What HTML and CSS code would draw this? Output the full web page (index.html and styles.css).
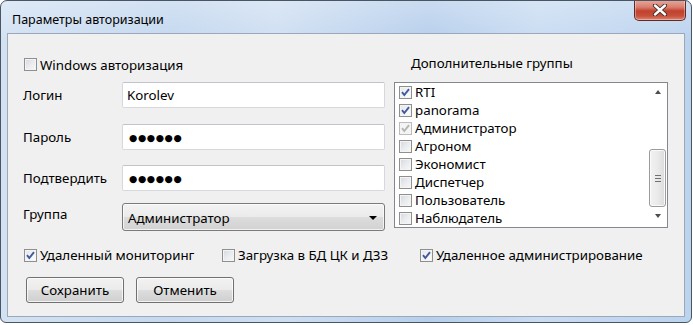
FILE: index.html
```html
<!DOCTYPE html>
<html lang="ru">
<head>
<meta charset="utf-8">
<title>Параметры авторизации</title>
<link rel="stylesheet" href="styles.css">
</head>
<body>
<div class="window">
  <div class="titlebar">
    <span class="title">Параметры авторизации</span>
    <div class="close">
      <svg width="18" height="12" viewBox="0 0 18 12"><path d="M4 1.5 L14 10.5 M14 1.5 L4 10.5" stroke="#3b2a2a" stroke-width="4.2" stroke-linecap="round"/><path d="M4 1.5 L14 10.5 M14 1.5 L4 10.5" stroke="#ffffff" stroke-width="2.4" stroke-linecap="round"/></svg>
    </div>
  </div>
  <div class="client">
    <div class="main">
      <div class="left">
        <div class="check head-check"><span class="box"></span><span>Windows авторизация</span></div>
        <div class="form">
          <div class="row r1"><span class="lbl">Логин</span><div class="field">Korolev</div></div>
          <div class="row r2"><span class="lbl">Пароль</span><div class="field dots">●●●●●●</div></div>
          <div class="row r3"><span class="lbl">Подтвердить</span><div class="field dots">●●●●●●</div></div>
          <div class="row r4"><span class="lbl lbl-up">Группа</span><div class="combo"><span>Администратор</span><span class="tri-down dark"></span></div></div>
        </div>
      </div>
      <div class="right">
        <div class="groups-title">Дополнительные группы</div>
        <div class="listbox">
          <div class="items">
            <div class="check item"><span class="box checked"><svg viewBox="0 0 13 13"><path d="M3 6.2 L5.3 9 L10 3.2" fill="none" stroke="#3f58a0" stroke-width="1.9"/></svg></span><span>RTI</span></div>
            <div class="check item"><span class="box checked"><svg viewBox="0 0 13 13"><path d="M3 6.2 L5.3 9 L10 3.2" fill="none" stroke="#3f58a0" stroke-width="1.9"/></svg></span><span>panorama</span></div>
            <div class="check item"><span class="box disabled"><svg viewBox="0 0 13 13"><path d="M3 6.2 L5.3 9 L10 3.2" fill="none" stroke="#b4b4b4" stroke-width="1.9"/></svg></span><span>Администратор</span></div>
            <div class="check item"><span class="box"></span><span>Агроном</span></div>
            <div class="check item"><span class="box"></span><span>Экономист</span></div>
            <div class="check item"><span class="box"></span><span>Диспетчер</span></div>
            <div class="check item"><span class="box"></span><span>Пользователь</span></div>
            <div class="check item"><span class="box"></span><span>Наблюдатель</span></div>
          </div>
          <div class="scrollbar">
            <span class="arrow"><span class="tri-up"></span></span>
            <span class="track-top"></span>
            <span class="thumb"><span class="grip"></span><span class="grip"></span><span class="grip"></span></span>
            <span class="arrow"><span class="tri-down"></span></span>
          </div>
        </div>
      </div>
    </div>
    <div class="options">
      <div class="check"><span class="box checked"><svg viewBox="0 0 13 13"><path d="M3 6.2 L5.3 9 L10 3.2" fill="none" stroke="#3f58a0" stroke-width="1.9"/></svg></span><span>Удаленный мониторинг</span></div>
      <div class="check"><span class="box"></span><span>Загрузка в БД ЦК и ДЗЗ</span></div>
      <div class="check"><span class="box checked"><svg viewBox="0 0 13 13"><path d="M3 6.2 L5.3 9 L10 3.2" fill="none" stroke="#3f58a0" stroke-width="1.9"/></svg></span><span>Удаленное администрирование</span></div>
    </div>
    <div class="buttons">
      <div class="btn">Сохранить</div>
      <div class="btn">Отменить</div>
    </div>
  </div>
</div>
</body>
</html>
```

FILE: styles.css
```css
* { box-sizing: border-box; }
html, body { margin: 0; padding: 0; background: #ffffff; }
body {
  width: 693px;
  height: 325px;
  font-family: "Noto Sans", "Open Sans", sans-serif;
  font-size: 13.3px;
  color: #000;
}
.window {
  width: 692px;
  height: 323px;
  border: 1px solid #4a5563;
  border-radius: 7px 7px 6px 6px;
  background:
    linear-gradient(to bottom, rgba(255,255,255,0.25), rgba(255,255,255,0) 40px),
    linear-gradient(to right, #d3e2f3 0%, #c4d8ef 25%, #cfdff2 40%, #b7cfec 62%, #c9dcf2 78%, #bcd3ee 100%);
  display: flex;
  flex-direction: column;
  overflow: hidden;
}
.titlebar {
  height: 32px;
  display: flex;
  justify-content: space-between;
  align-items: flex-start;
  padding-left: 11px;
  padding-right: 5px;
}
.title {
  margin-top: 11px;
  line-height: 16px;
  font-size: 12.5px;
  color: #000;
}
.close {
  margin-top: -1px;
  width: 52px;
  height: 21px;
  border: 1px solid #5d2a24;
  border-top: none;
  border-radius: 0 0 5px 5px;
  background: linear-gradient(to bottom, #e9a99c 0%, #d9806f 35%, #c0412e 55%, #c8503c 80%, #dc8674 100%);
  display: flex;
  align-items: center;
  justify-content: center;
  box-shadow: inset 0 0 0 1px rgba(255,255,255,0.35);
}
.client {
  flex: 1;
  margin: 0 6px 5px 6px;
  border: 1px solid #9aa8ba;
  background: #f0f0f0;
  padding: 22px 0 0 15px;
}
.main {
  display: grid;
  grid-template-columns: 362px 274px;
  column-gap: 9px;
}
.check {
  display: flex;
  align-items: center;
  white-space: nowrap;
}
.box {
  width: 13px;
  height: 13px;
  flex: 0 0 13px;
  border: 1px solid #8e8f8f;
  background: linear-gradient(135deg, #d4d7dc 0%, #e9ebee 50%, #f8f8f8 100%);
  box-shadow: inset 0 0 0 1px #f4f4f4;
  margin-right: 3px;
  position: relative;
}
.box svg { position: absolute; left: -1px; top: -1px; width: 13px; height: 13px; }
.box.checked {
  background: linear-gradient(135deg, #e4e6ea 0%, #f4f5f6 60%, #ffffff 100%);
}
.box.disabled {
  border-color: #bcbcbc;
  background: #f4f4f4;
}
.head-check {
  height: 26px;
  align-items: flex-start;
  padding-top: 0px;
  padding-left: 1px;
}
.head-check .box { margin-top: 2px; }
.form { display: flex; flex-direction: column; }
.row {
  display: flex;
  align-items: center;
}
.r2 { margin-top: 16px; }
.r3 { margin-top: 15px; }
.r4 { margin-top: 12px; }
.lbl {
  width: 99px;
  flex: 0 0 99px;
}
.lbl-up { margin-top: -6px; }
.field {
  width: 263px;
  height: 26px;
  background: #fff;
  border: 1px solid #d5d9de;
  border-top-color: #c0c4ca;
  border-radius: 2px;
  padding: 0 4px;
  display: flex;
  align-items: center;
}
.dots {
  font-family: "DejaVu Sans", sans-serif;
  font-size: 9.5px;
  letter-spacing: 0.6px;
  padding-left: 6px;
}
.combo {
  width: 263px;
  height: 28px;
  border: 1px solid #7a7a7a;
  border-radius: 3px;
  background: linear-gradient(to bottom, #f3f3f3 0%, #ebebeb 48%, #dcdcdc 52%, #d2d2d2 100%);
  box-shadow: inset 0 0 0 1px rgba(255,255,255,0.7);
  display: flex;
  align-items: center;
  justify-content: space-between;
  padding: 2px 7px 0 5px;
}
.tri-down {
  width: 0; height: 0;
  border-left: 3.5px solid transparent;
  border-right: 3.5px solid transparent;
  border-top: 4px solid #4d4d4d;
}
.tri-down.dark { border-top-color: #000; border-left-width: 4px; border-right-width: 4px; }
.tri-up {
  width: 0; height: 0;
  border-left: 3.5px solid transparent;
  border-right: 3.5px solid transparent;
  border-bottom: 4px solid #4d4d4d;
}
.groups-title {
  height: 26px;
  padding-left: 17px;
  margin-top: -2px;
}
.listbox {
  height: 146px;
  border: 1px solid #828790;
  background: #fff;
  display: flex;
  justify-content: space-between;
  margin-top: 2px;
}
.items { padding: 0 0 0 4px; }
.item { height: 18px; }
.scrollbar {
  width: 17px;
  margin-right: 1px;
  display: flex;
  flex-direction: column;
  align-items: stretch;
}
.arrow {
  height: 17px;
  display: flex;
  align-items: center;
  justify-content: center;
}
.track-top { height: 49px; }
.thumb {
  height: 58px;
  border: 1px solid #9b9b9b;
  border-radius: 3px;
  background: linear-gradient(to right, #f2f2f2 0%, #eaeaea 50%, #dbdbdb 100%);
  box-shadow: inset 0 0 0 1px #fafafa;
  display: flex;
  flex-direction: column;
  align-items: center;
  justify-content: center;
  gap: 2px;
}
.grip { width: 6px; height: 1px; background: #707070; }
.options {
  display: grid;
  grid-template-columns: 198px 198px auto;
  margin-top: 15px;
  padding-left: 1px;
}
.buttons {
  display: flex;
  gap: 12px;
  margin-top: 13px;
  padding-left: 3px;
}
.btn {
  width: 98px;
  height: 26px;
  border: 1px solid #707070;
  border-radius: 3px;
  background: linear-gradient(to bottom, #f2f2f2 0%, #ebebeb 48%, #dddddd 52%, #cfcfcf 100%);
  box-shadow: inset 0 0 0 1px rgba(255,255,255,0.75);
  display: flex;
  align-items: center;
  justify-content: center;
}
```
